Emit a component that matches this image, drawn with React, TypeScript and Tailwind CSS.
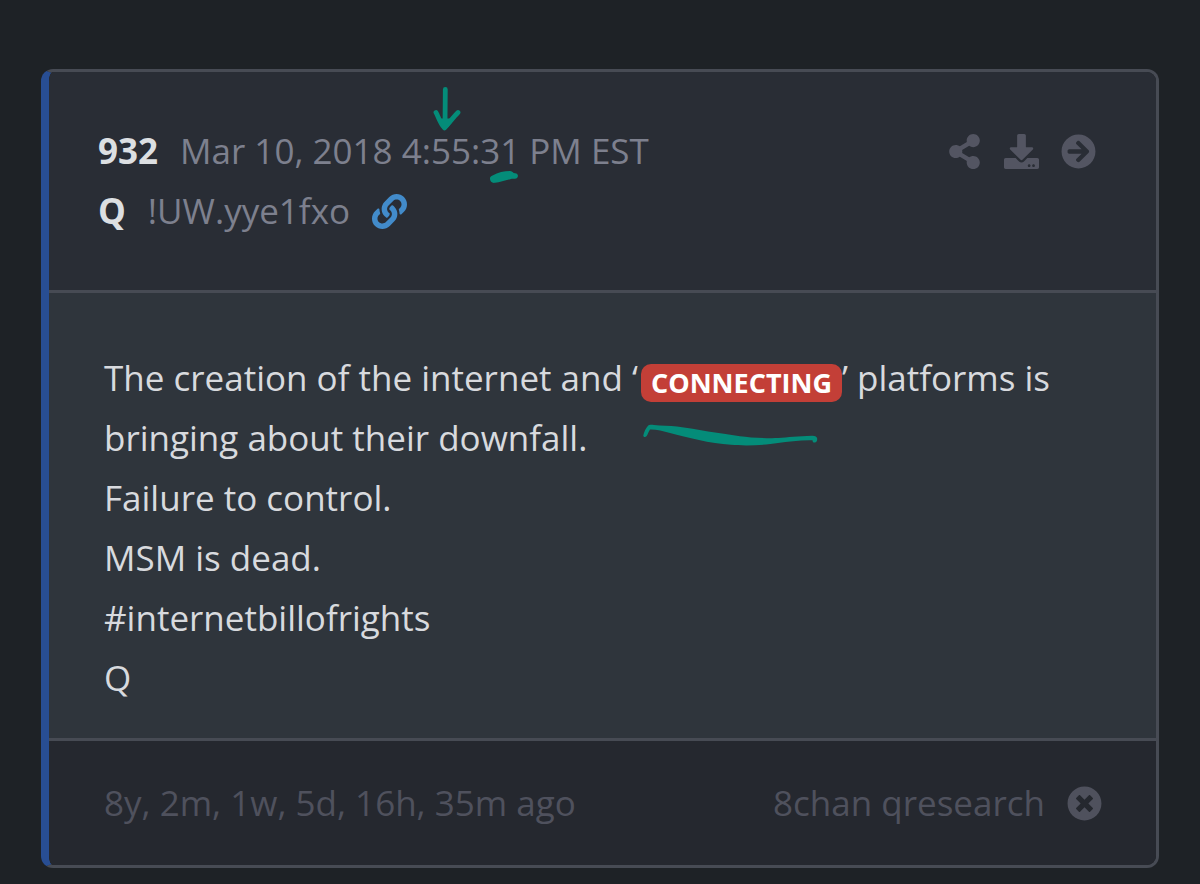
import { FaArrowCircleRight, FaDownload, FaLink, FaShareAlt, FaTimesCircle } from "react-icons/fa";

const lines = ["Failure to control.", "MSM is dead.", "#internetbillofrights", "Q"];

function DownArrow() {
  return (
    <svg
      className="pointer-events-none absolute -top-10 left-0.5 h-11 w-7 text-[#048c79]"
      viewBox="0 0 28 44"
      fill="none"
      stroke="currentColor"
      strokeWidth="4.8"
      strokeLinecap="round"
      strokeLinejoin="round"
      aria-hidden="true"
    >
      <path d="M12.3 2.5 12 40" />
      <path d="M3 25.5c2 3 3.500 10 8.500 15.500C16 36 21 29.500 25 25.500" />
      <path d="M8 34l4 6 5-6z" fill="currentColor" />
    </svg>
  );
}

function ShortStroke() {
  return (
    <svg
      className="pointer-events-none absolute top-11 left-2.5 h-3 w-7 text-[#048c79]"
      viewBox="0 0 28 12"
      aria-hidden="true"
    >
      <path
        d="M0 8C-.3 6.200 .8 4.900 2.500 4.400 8 1.500 14 .2 20 .1c1.600.1 2.800.9 3.600 2 2 .1 4 .7 4.300 2.500.2 1.800-1.200 3-3 3.100-1.500.1-2.500-.2-4 .2C15 9.500 10 10.900 5 11.800 2 12.300 .2 10.700 0 8z"
        fill="currentColor"
      />
    </svg>
  );
}

function LongStroke() {
  return (
    <svg
      className="pointer-events-none absolute top-15 left-0.5 h-6 w-44 text-[#048c79]"
      viewBox="0 0 176 24"
      aria-hidden="true"
    >
      <path
        d="M.3 11.500C1 8 3 4 5 1.800 6 .8 8 .6 11 1c7 .8 16 .7 23 1.600C55 5.500 75 9.500 97 12.200c10 1.300 25 2.300 38 1.900 10-.7 20-2 34-2.300 3-.1 5.300 1 5.200 3.200.1 2-.8 3.600-2.600 3.500-1.600 0-2-.9-2.100-2.300-12-.3-24 1.300-34.500 2.900-14 2.200-33 2.900-47 1.700C67 19.200 44 13.500 27 8.900 20 6.800 13 5.200 7 5.400 5.500 7.500 5 10 3.700 12 2.500 13.600.2 13.500.3 11.500z"
        fill="currentColor"
      />
    </svg>
  );
}

export default function App() {
  return (
    <main className="min-h-screen bg-[#1e2226] px-[41px] pt-[69px] pb-4 font-['Open_Sans',sans-serif] text-[35px] leading-[60px]">
      <article className="overflow-hidden rounded-xl border-3 border-l-8 border-[#474b54] border-l-[#284e93]">
        <header className="flex items-start justify-between border-b-3 border-[#474b54] bg-[#292d35] pt-[49px] pr-15 pb-[49px] pl-[49px] text-[#7d808e]">
          <div>
            <div className="flex gap-[22px]">
              <strong className="font-bold text-[#dcdfe2]">932</strong>
              <time dateTime="2018-03-10T16:55:31-05:00">
                Mar 10, 2018 4:
                <span className="relative">
                  55
                  <DownArrow />
                </span>
                :
                <span className="relative">
                  31
                  <ShortStroke />
                </span>{" "}
                PM EST
              </time>
            </div>
            <div className="flex items-center gap-[22px]">
              <strong className="font-bold text-[#dcdfe2]">Q</strong>
              <span>!UW.yye1fxo</span>
              <a href="#post-932" aria-label="Link to post" className="text-[#428bca]">
                <FaLink />
              </a>
            </div>
          </div>
          <div className="flex h-[60px] items-center gap-[22px] text-[#535562]">
            <button type="button" aria-label="Share">
              <FaShareAlt />
            </button>
            <button type="button" aria-label="Download">
              <FaDownload />
            </button>
            <button type="button" aria-label="Go to post">
              <FaArrowCircleRight />
            </button>
          </div>
        </header>
        <section className="border-b-3 border-[#474b54] bg-[#2f353c] px-[55px] pt-[55px] pb-[30px] text-[#d8dade]">
          <p>
            The creation of the internet and ‘
            <span className="relative ml-[3px] inline-block rounded-[10px] bg-[#c33f37] px-2.5 align-[-2px] text-[27px] leading-[38px] font-bold text-white">
              CONNECTING
              <LongStroke />
            </span>
            ’ platforms is bringing about their downfall.
          </p>
          {lines.map((line) => (
            <p key={line}>{line}</p>
          ))}
        </section>
        <footer className="flex items-center justify-between bg-[#25282f] pt-8 pr-[54px] pb-8 pl-[55px] text-[#4f515d]">
          <span>8y, 2m, 1w, 5d, 16h, 35m ago</span>
          <span className="flex items-center gap-[22px]">
            8chan qresearch
            <button type="button" aria-label="Close">
              <FaTimesCircle />
            </button>
          </span>
        </footer>
      </article>
    </main>
  );
}
